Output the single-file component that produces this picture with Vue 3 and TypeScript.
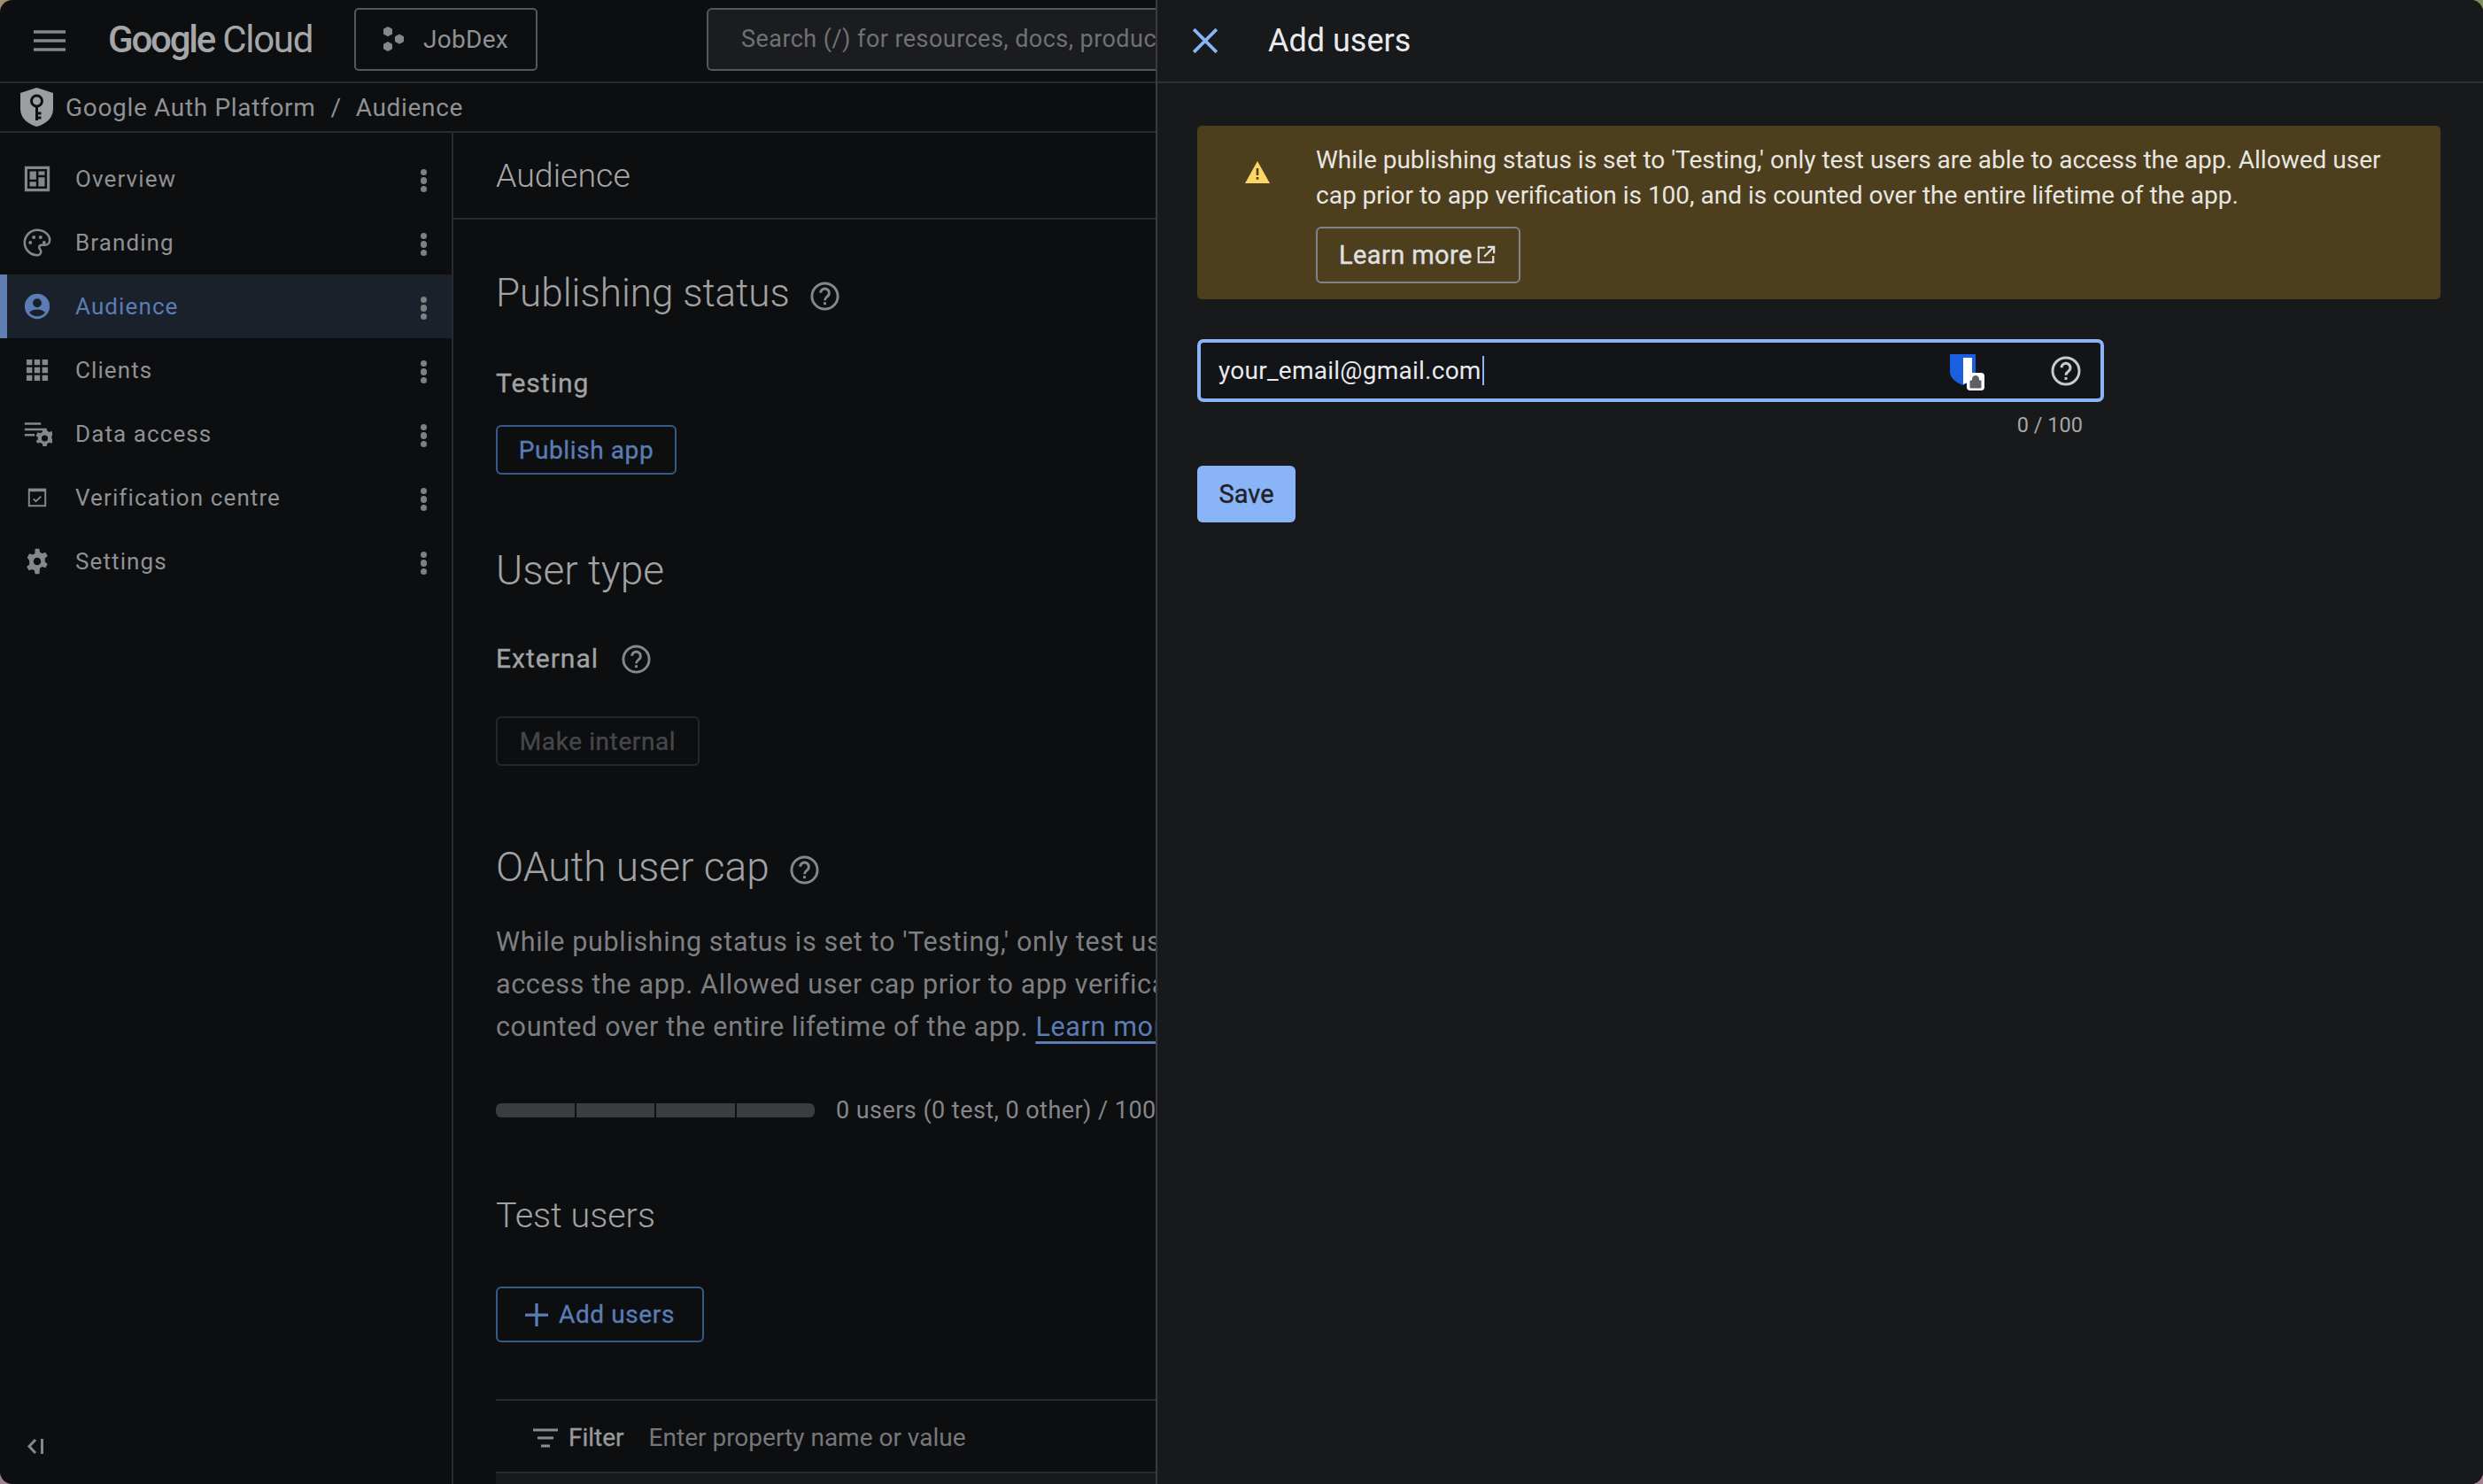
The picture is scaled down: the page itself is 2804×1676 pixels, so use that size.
<template>
  <div class="screen">
    <div class="window">
      <!-- console behind the drawer -->
      <div class="console">
        <header class="topbar">
          <svg class="burger" viewBox="0 0 36 24"><path d="M0 2h36M0 12h36M0 22h36" stroke="#85878a" stroke-width="3.6" /></svg>
          <span class="logo"><b>Google</b> Cloud</span>
          <button class="project">
            <svg viewBox="0 0 28 28" width="28" height="28" fill="#85878a">
              <path d="M6 0l5 2.800v5.600L6 11.200 1 8.400V2.800zM19 8.500l5 2.800v5.600l-5 2.800-5-2.800v-5.600zM6 17l5 2.800v5.400L6 28l-5-2.800v-5.400z" />
            </svg>
            JobDex
          </button>
          <div class="search">Search (/) for resources, docs, products</div>
        </header>

        <div class="crumbs">
          <svg viewBox="0 0 37 44" width="37" height="44">
            <path d="M18.500 0L37 6v18c0 10-8 17-18.500 20C8 41 0 34 0 24V6z" fill="#9b9d9f" />
            <circle cx="18.500" cy="15" r="6" fill="none" stroke="#0d0e10" stroke-width="3" />
            <path d="M18.500 21v16M18.500 29h5M18.500 34h5" stroke="#0d0e10" stroke-width="3" fill="none" />
          </svg>
          <span class="crumb-link">Google Auth Platform</span>
          <span class="crumb-sep">/</span>
          <span class="crumb-link">Audience</span>
        </div>

        <div class="body">
          <aside class="sidebar">
            <nav>
              <a v-for="item in navItems" :key="item.label" class="nav-item" :class="{ active: item.label === 'Audience' }">
                <svg class="nav-icon" viewBox="0 0 24 24" v-html="item.icon"></svg>
                <span class="nav-label">{{ item.label }}</span>
                <span class="kebab"><i></i><i></i><i></i></span>
              </a>
            </nav>
            <svg class="collapse" viewBox="0 0 20 20" width="20" height="20">
              <path d="M10 2L3 9.500 10 17M17.500 1v17" fill="none" stroke="#85878a" stroke-width="3" />
            </svg>
          </aside>

          <main class="main">
            <div class="page-title">Audience</div>
            <section class="content">
              <h2 class="heading first">
                Publishing status
                <svg class="help" viewBox="0 0 24 24" v-html="helpPath"></svg>
              </h2>
              <div class="label testing">Testing</div>
              <button class="outline publish">Publish app</button>

              <h2 class="heading user-type">User type</h2>
              <div class="label external">
                External
                <svg class="help" viewBox="0 0 24 24" v-html="helpPath"></svg>
              </div>
              <button class="outline disabled">Make internal</button>

              <h2 class="heading oauth">
                OAuth user cap
                <svg class="help" viewBox="0 0 24 24" v-html="helpPath"></svg>
              </h2>
              <p class="para">
                While publishing status is set to 'Testing,' only test users are able to<br />
                access the app. Allowed user cap prior to app verification is 100, and is<br />
                counted over the entire lifetime of the app. <a class="link">Learn more</a>
              </p>
              <div class="cap-row">
                <div class="cap-bar"><span v-for="n in 4" :key="n"></span></div>
                <span class="cap-text">0 users (0 test, 0 other) / 100 user cap</span>
              </div>

              <h2 class="heading test-users">Test users</h2>
              <button class="outline add">
                <svg viewBox="0 0 24 24" width="26" height="26"><path d="M12 0v24M0 12h24" stroke="#5a7db5" stroke-width="3" /></svg>
                Add users
              </button>

              <div class="filter">
                <svg viewBox="0 0 28 22" width="28" height="22"><path d="M0 2h28M5 11h18M9 20h10" stroke="#8a8c8f" stroke-width="3" /></svg>
                <span class="filter-label">Filter</span>
                <span class="filter-hint">Enter property name or value</span>
              </div>
              <div class="table-head"></div>
            </section>
          </main>
        </div>
      </div>

      <!-- add users drawer -->
      <aside class="drawer">
        <div class="drawer-head">
          <svg viewBox="0 0 28 28" width="30" height="30"><path d="M2 2l24 24M26 2L2 26" stroke="#8ab4f8" stroke-width="3.400" /></svg>
          <span class="drawer-title">Add users</span>
        </div>
        <div class="drawer-body">
          <div class="warning">
            <svg class="warn-icon" viewBox="0 0 28 25" width="28" height="25">
              <path d="M14 0l14 25H0z" fill="#fdd663" />
              <path d="M12.700 8h2.600v8h-2.600zM12.700 18h2.600v2.800h-2.600z" fill="#4d3f1d" />
            </svg>
            <div class="warn-text">
              <p>While publishing status is set to 'Testing,' only test users are able to access the app. Allowed user cap prior to app verification is 100, and is counted over the entire lifetime of the app.</p>
              <button class="learn">
                Learn more
                <svg viewBox="0 0 24 24" width="22" height="22"><path d="M11 3H3v18h18v-8M14 2h8v8M22 2L10 14" fill="none" stroke="#e0e1e3" stroke-width="2.400" /></svg>
              </button>
            </div>
          </div>

          <div class="email">
            <span class="email-value">your_email@gmail.com</span><span class="caret"></span>
            <span class="shield">
              <svg viewBox="0 0 30 36" width="30" height="36">
                <path d="M0 0h29v20c0 7-8 12-14.500 15C7 32 0 27 0 20z" fill="#1a5fe0" />
                <path d="M15 4h10v26l-10 4z" fill="#fff" />
              </svg>
              <span class="lock">
                <svg viewBox="0 0 16 16" width="16" height="16">
                  <path d="M4.500 7V5a3.500 3.500 0 017 0v2M2 7h12v8H2z" fill="#5f6063" stroke="#5f6063" stroke-width="1" />
                </svg>
              </span>
            </span>
            <svg class="email-help" viewBox="0 0 24 24" v-html="helpPath"></svg>
          </div>
          <div class="counter">0 / 100</div>
          <button class="save">Save</button>
        </div>
      </aside>
    </div>
  </div>
</template>

<script setup lang="ts">
const helpPath =
  '<circle cx="12" cy="12" r="10" fill="none" stroke="currentColor" stroke-width="2"/><path d="M8.700 9.500a3.300 3.300 0 1 1 5.200 2.700c-1.200.9-1.900 1.500-1.900 3" fill="none" stroke="currentColor" stroke-width="2"/><rect x="11" y="16.600" width="2" height="2" fill="currentColor"/>';

const navItems = [
  {
    label: "Overview",
    icon: '<path fill-rule="evenodd" d="M2 2h20v20H2zM4.200 4.200v15.600h15.600V4.200z M6 6h5.200v6.500H6z M13 6h5v3h-5z M13 10.800h5v7.200h-5z M6 14.300h5.200V18H6z" />',
  },
  {
    label: "Branding",
    icon: '<path d="M12 2C6.500 2 2 6.500 2 12s4.500 10 10 10c1.800 0 3-1.300 3-2.800 0-1.800-1.400-2-1.400-3.400 0-1 .8-1.800 1.800-1.800H18c2.300 0 4-1.800 4-4C22 5.800 17.500 2 12 2z" fill="none" stroke="currentColor" stroke-width="1.800"/><circle cx="6.500" cy="12" r="1.400"/><circle cx="9.300" cy="7.800" r="1.400"/><circle cx="14.700" cy="7.800" r="1.400"/><circle cx="17.500" cy="12" r="1.400"/>',
  },
  {
    label: "Audience",
    icon: '<path fill-rule="evenodd" d="M12 2a10 10 0 100 20 10 10 0 000-20zM12 5.800a3.500 3.500 0 110 7 3.500 3.500 0 010-7zM12 20c-2.600 0-4.900-1.200-6.300-3.200C7.100 15.200 9.500 14.400 12 14.400s4.900.8 6.300 2.400C16.900 18.800 14.600 20 12 20z" />',
  },
  {
    label: "Clients",
    icon: '<path d="M3.500 3.500h4.500v4.500H3.500zM9.750 3.500h4.500v4.500h-4.500zM16 3.500h4.500v4.500H16zM3.500 9.750h4.500v4.500H3.500zM9.750 9.750h4.500v4.500h-4.500zM16 9.750h4.500v4.500H16zM3.500 16h4.500v4.500H3.500zM9.750 16h4.500v4.500h-4.500zM16 16h4.500v4.500H16z"/>',
  },
  {
    label: "Data access",
    icon: '<path d="M2 3h13v1.800H2zM2 7.500h15v1.800H2zM2 12h8v1.800H2z"/><path fill-rule="evenodd" d="M16.500 10.500h3l.4 2 1.700 1 1.900-.7 1.500 2.600-1.500 1.300v2l1.500 1.300-1.500 2.600-1.900-.7-1.700 1-.4 2h-3l-.4-2-1.700-1-1.900.7L11 20.900l1.500-1.300v-2L11 16.400l1.500-2.600 1.900.7 1.700-1zM18 16a2.500 2.500 0 100 5 2.500 2.500 0 000-5z" transform="translate(0 -3)"/>',
  },
  {
    label: "Verification centre",
    icon: '<path d="M5.500 5.500h13v13h-13z" fill="none" stroke="currentColor" stroke-width="1.400"/><path d="M5 4.800h14v2.400H5z"/><path d="M9 13l2 2 4-4" fill="none" stroke="currentColor" stroke-width="1.300"/>',
  },
  {
    label: "Settings",
    icon: '<path fill-rule="evenodd" d="M10.300 2h3.400l.5 2.700 1.800 1 2.600-.9 1.700 3-2.100 1.800v2.800l2.100 1.800-1.700 3-2.600-.9-1.800 1L13.700 22h-3.400l-.5-2.700-1.800-1-2.600.9-1.700-3 2.100-1.800v-2.800L4.100 8.800l1.700-3 2.600.9 1.800-1zM12 9a3 3 0 100 6 3 3 0 000-6z"/>',
  },
];
</script>

<style>
html,
body {
  margin: 0;
  background: #0d0e10;
}
</style>

<style scoped>
.screen {
  width: 2804px;
  height: 1676px;
  overflow: hidden;
  background: linear-gradient(90deg, #a08c70, #7f8f60) top / 100% 50% no-repeat,
    linear-gradient(90deg, #a08090, #a08090) bottom / 100% 50% no-repeat;
}
.window {
  position: relative;
  height: 100%;
  overflow: hidden;
  border-radius: 14px;
  background: #0d0e10;
  font-family: Roboto, "Liberation Sans", sans-serif;
  color: #97999c;
}
/* the drawer takes the right side, the console keeps the rest */
.console {
  display: flex;
  flex-direction: column;
  box-sizing: border-box;
  height: 100%;
  padding-right: 1499px;
}
button {
  font-family: inherit;
  background: none;
  cursor: pointer;
  white-space: nowrap;
}

/* top bar */
.topbar {
  display: flex;
  align-items: center;
  flex: none;
  box-sizing: border-box;
  height: 94px;
  padding: 0 0 4px 38px;
  border-bottom: 2px solid #2a2b2e;
}
.burger {
  width: 36px;
  height: 24px;
  margin-top: 4px;
}
.logo {
  width: 278px;
  margin-left: 48px;
  font-size: 42px;
  letter-spacing: -1.3px;
  color: #a5a6a8;
}
.logo b {
  font-weight: 500;
  letter-spacing: -2.2px;
}
.project {
  display: flex;
  align-items: center;
  gap: 18px;
  box-sizing: border-box;
  width: 207px;
  height: 71px;
  padding: 0 0 0 30px;
  border: 2px solid #55575b;
  border-radius: 5px;
  font-size: 28px;
  letter-spacing: 0.3px;
  color: #8f9194;
}
.search {
  box-sizing: border-box;
  flex: 1;
  min-width: 0;
  height: 71px;
  margin-left: 191px;
  padding-left: 37px;
  overflow: hidden;
  border: 2px solid #55575b;
  border-right: 0;
  border-radius: 6px 0 0 6px;
  background: #1b1c1f;
  font-size: 27px;
  letter-spacing: 0.45px;
  line-height: 67px;
  white-space: nowrap;
  color: #6f7174;
}

/* breadcrumb */
.crumbs {
  display: flex;
  align-items: center;
  flex: none;
  height: 54px;
  padding-left: 23px;
  border-bottom: 2px solid #2a2b2e;
  font-size: 28px;
  letter-spacing: 0.67px;
  color: #8f9194;
}
.crumb-link {
  margin-left: 14px;
}
.crumb-sep {
  margin: 0 2px 0 17px;
}

/* sidebar */
.body {
  display: flex;
  flex: 1;
  min-height: 0;
}
.sidebar {
  display: flex;
  flex-direction: column;
  flex: none;
  width: 510px;
  padding-top: 16px;
  border-right: 2px solid #2a2b2e;
}
.nav-item {
  display: flex;
  align-items: center;
  height: 72px;
  padding-left: 25px;
  font-size: 26px;
  letter-spacing: 1.1px;
  color: #8f9194;
}
.nav-item.active {
  padding-left: 17px;
  border-left: 8px solid #5f7fb3;
  background: #1a212b;
  color: #5a7db5;
}
.nav-icon {
  flex: none;
  width: 34px;
  height: 34px;
  fill: currentColor;
  color: #85878a;
}
.active .nav-icon {
  color: #5a7db5;
}
.nav-label {
  flex: 1;
  margin-left: 26px;
}
.kebab {
  display: flex;
  flex-direction: column;
  gap: 2px;
  margin: 4px 28px 0 0;
}
.kebab i {
  width: 7.500px;
  height: 7.500px;
  border-radius: 50%;
  background: #7d7f82;
}
.collapse {
  margin: auto 0 32px 30px;
}

/* main column, cut off by the drawer */
.main {
  flex: 1;
  min-width: 0;
  overflow: hidden;
}
.page-title {
  box-sizing: border-box;
  height: 98px;
  padding-left: 48px;
  border-bottom: 2px solid #2a2b2e;
  font-size: 37.500px;
  font-weight: 300;
  line-height: 96px;
  color: #a5a6a8;
}
.content {
  padding-left: 48px;
}
.heading {
  display: flex;
  align-items: center;
  margin: 0;
  font-size: 44px;
  font-weight: 300;
  line-height: 56px;
  color: #a0a2a4;
}
.heading.first {
  margin-top: 55px;
}
.heading.user-type {
  margin-top: 80px;
  font-size: 46px;
}
.heading.oauth {
  margin-top: 86px;
  font-size: 46px;
}
.heading.test-users {
  margin-top: 75px;
  font-size: 39.500px;
}
.help {
  width: 35px;
  height: 35px;
  margin: 7px 0 0 22px;
  color: #85878a;
}
/* Roboto only has 400 and 500 here, the original sits between the two */
.label,
.outline,
.filter-label,
.learn,
.save {
  -webkit-text-stroke: 0.35px currentColor;
}
.label {
  display: flex;
  align-items: center;
  font-size: 30px;
  letter-spacing: 1px;
  line-height: 40px;
  color: #a0a2a4;
}
.label.testing {
  margin-top: 54px;
}
.label.external {
  margin-top: 52px;
}
.label .help {
  margin: 0 0 0 25px;
}
.outline {
  display: flex;
  align-items: center;
  justify-content: center;
  box-sizing: border-box;
  height: 56px;
  padding: 0;
  border: 2px solid #37598a;
  border-radius: 6px;
  font-size: 28px;
  letter-spacing: 0.6px;
  color: #5a7db5;
}
.publish {
  width: 204px;
  margin-top: 27px;
}
.disabled {
  width: 230px;
  margin-top: 45px;
  border-color: #26272a;
  color: #45474a;
}
.para {
  margin: 33px 0 0;
  font-size: 30.500px;
  letter-spacing: 0.65px;
  line-height: 48px;
  white-space: nowrap;
  color: #7d7f82;
}
.link {
  color: #5a7db5;
  text-decoration: underline;
  text-underline-offset: 6px;
}
.cap-row {
  display: flex;
  align-items: center;
  margin-top: 54px;
  white-space: nowrap;
}
.cap-bar {
  display: flex;
  flex: none;
  gap: 2px;
  width: 360px;
  height: 16px;
  border-radius: 6px;
  overflow: hidden;
}
.cap-bar span {
  flex: 1;
  background: #3a3c40;
}
.cap-text {
  margin-left: 24px;
  font-size: 27px;
  letter-spacing: 0.45px;
  color: #85878a;
}
.add {
  gap: 12px;
  width: 235px;
  height: 63px;
  margin-top: 52px;
}
.filter {
  display: flex;
  align-items: center;
  box-sizing: border-box;
  height: 84px;
  margin-top: 64px;
  padding: 3px 0 0 42px;
  border-top: 2px solid #2a2b2e;
  border-bottom: 2px solid #2a2b2e;
  font-size: 28px;
  white-space: nowrap;
}
.filter-label {
  margin-left: 12px;
  color: #97999c;
}
.filter-hint {
  margin-left: 28px;
  color: #75777a;
}
.table-head {
  height: 30px;
  background: #18191b;
}

/* drawer */
.drawer {
  position: absolute;
  top: 0;
  right: 0;
  bottom: 0;
  box-sizing: border-box;
  width: 1499px;
  border-left: 2px solid #3a3b3e;
  background: #18191b;
  color: #e8eaed;
}
.drawer-head {
  display: flex;
  align-items: center;
  height: 92px;
  padding-left: 39px;
  border-bottom: 2px solid #2f3033;
}
.drawer-title {
  margin-left: 56px;
  font-size: 36px;
}
.drawer-body {
  display: flex;
  flex-direction: column;
  align-items: flex-start;
  padding: 48px 45px 0;
}
.warning {
  display: flex;
  box-sizing: border-box;
  width: 1404px;
  height: 196px;
  padding: 19px 0 0 54px;
  border-radius: 5px;
  background: #4d3f1d;
}
.warn-icon {
  flex: none;
  margin-top: 21px;
}
.warn-text {
  margin-left: 52px;
  font-size: 28px;
  line-height: 40px;
}
.warn-text p {
  width: 1245px;
  margin: 0;
  color: #e8e6e0;
}
.learn {
  display: flex;
  align-items: center;
  gap: 4px;
  box-sizing: border-box;
  width: 231px;
  height: 64px;
  margin-top: 15px;
  padding: 0 0 0 24px;
  border: 2px solid #80838a;
  border-radius: 6px;
  font-size: 29px;
  letter-spacing: 0.4px;
  color: #e0e1e3;
}
.email {
  display: flex;
  align-items: center;
  position: relative;
  box-sizing: border-box;
  width: 1024px;
  height: 71px;
  margin-top: 45px;
  padding-left: 20px;
  border: 4px solid #8ab4f8;
  border-radius: 7px;
  background: #131417;
  font-size: 28px;
  letter-spacing: 0.25px;
}
.caret {
  width: 2px;
  height: 33px;
  margin-left: 1px;
  background: #8ab4f8;
}
.shield {
  position: relative;
  height: 36px;
  margin: -2px 140px 0 auto;
}
.lock {
  position: absolute;
  right: -9px;
  bottom: -5px;
  display: flex;
  align-items: center;
  justify-content: center;
  width: 20px;
  height: 20px;
  border-radius: 4px;
  background: #fff;
}
.email-help {
  position: absolute;
  right: 21px;
  width: 36px;
  height: 36px;
  color: #c8c9cb;
}
.counter {
  align-self: flex-start;
  width: 1000px;
  margin-top: 12px;
  font-size: 23.500px;
  line-height: 28px;
  text-align: right;
  color: #a5a6a8;
}
.save {
  width: 111px;
  height: 64px;
  margin-top: 32px;
  padding: 0;
  border: 0;
  border-radius: 6px;
  background: #8ab4f8;
  font-size: 29px;
  color: #202124;
}
</style>
